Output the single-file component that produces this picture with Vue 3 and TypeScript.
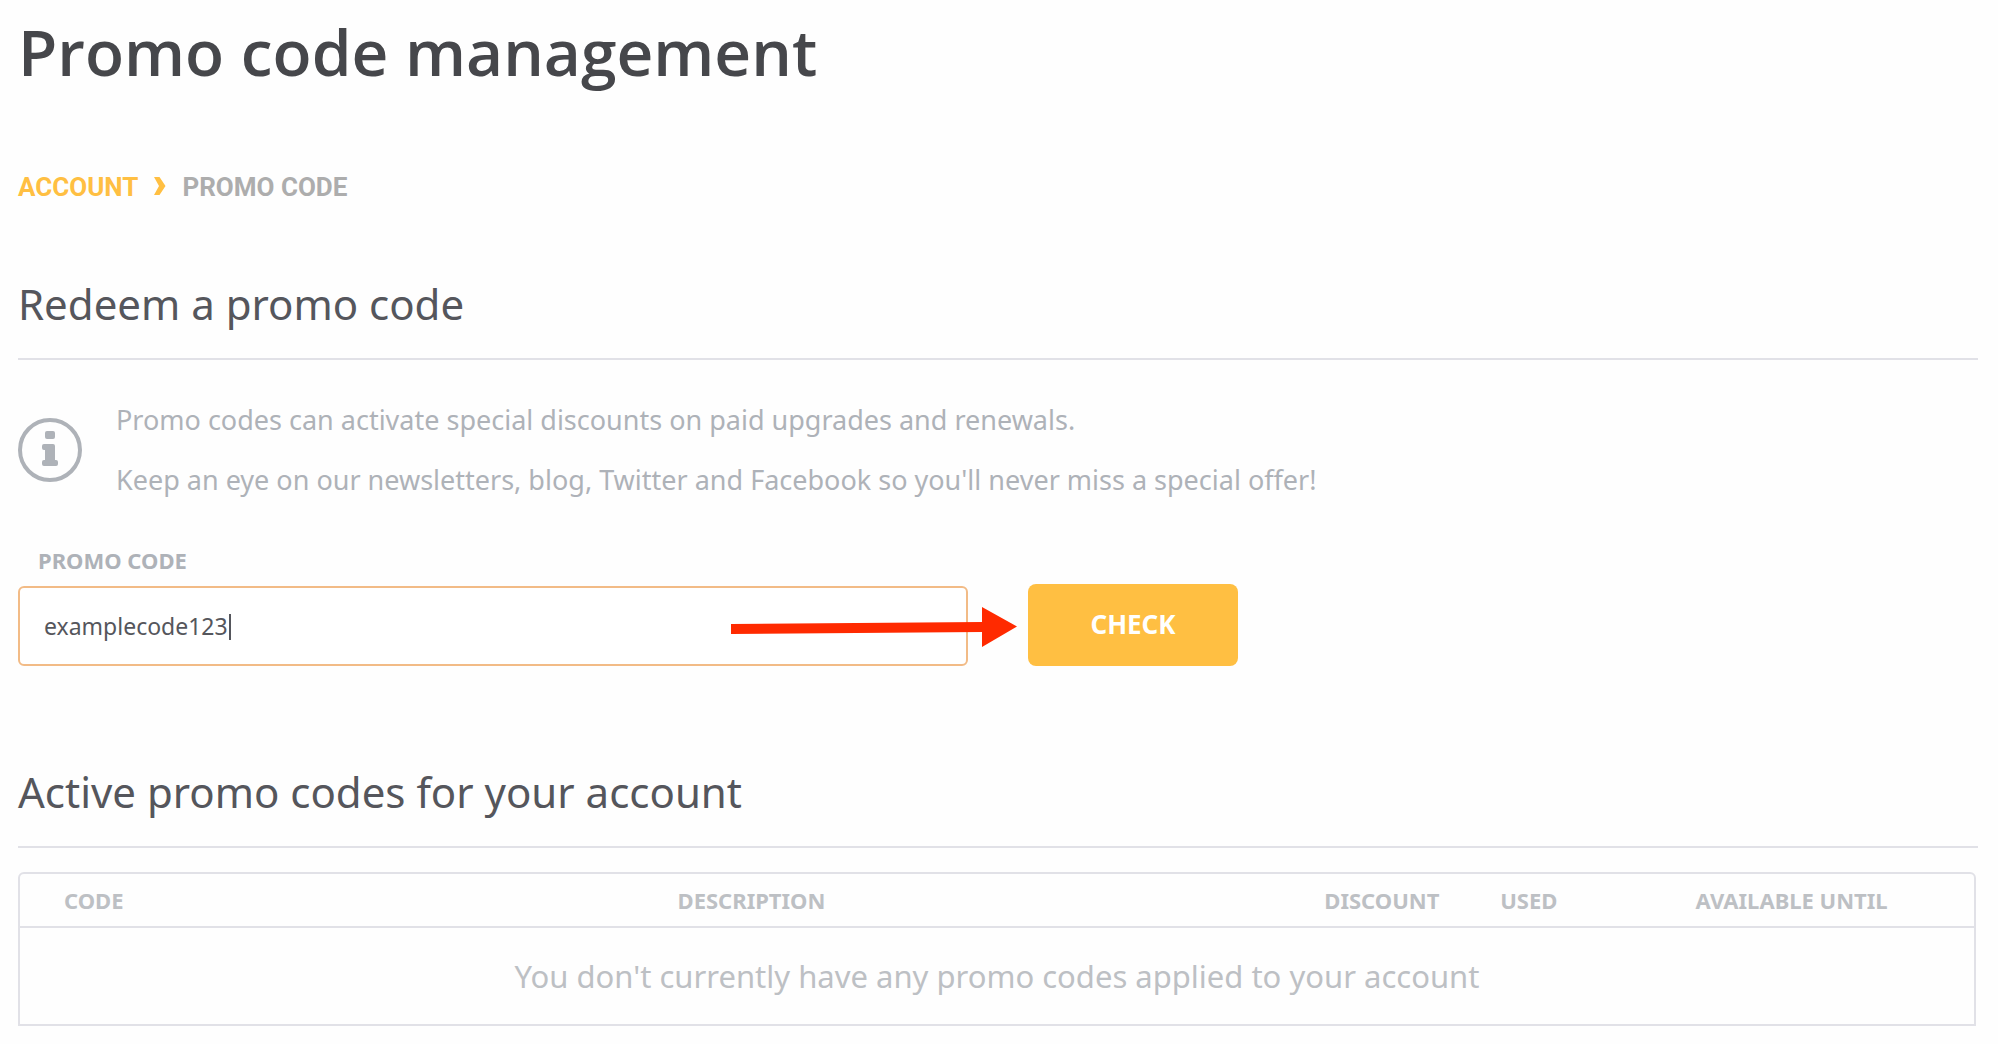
<script setup lang="ts">
import { ref } from 'vue'

interface Column {
  key: string
  label: string
}

const promoCode = ref<string>('examplecode123')

const columns: Column[] = [
  { key: 'code', label: 'CODE' },
  { key: 'description', label: 'DESCRIPTION' },
  { key: 'discount', label: 'DISCOUNT' },
  { key: 'used', label: 'USED' },
  { key: 'until', label: 'AVAILABLE UNTIL' },
]
</script>

<template>
  <main class="page">
    <h1 class="title">Promo code management</h1>

    <nav class="crumbs" aria-label="Breadcrumb">
      <a class="crumb-link" href="#account">ACCOUNT</a>
      <svg class="crumb-arrow" viewBox="0 0 12 18" aria-hidden="true">
        <path d="M0 0h5.500l6 9-6 9H0l5-9z" fill="#ffbf42" />
      </svg>
      <span>PROMO CODE</span>
    </nav>

    <section>
      <h2 class="heading">Redeem a promo code</h2>

      <div class="info">
        <svg class="info-icon" viewBox="0 0 64 64" aria-hidden="true">
          <circle cx="32" cy="32" r="30" fill="none" stroke="#aeb2b8" stroke-width="4" />
          <rect x="27" y="13" width="10" height="8" rx="2" fill="#aeb2b8" />
          <path
            d="M26 26h9a2 2 0 0 1 2 2v14h1a2 2 0 0 1 2 2v2a2 2 0 0 1-2 2H26a2 2 0 0 1-2-2v-2a2 2 0 0 1 2-2h1V32h-1a2 2 0 0 1-2-2v-2a2 2 0 0 1 2-2z"
            fill="#aeb2b8"
          />
        </svg>
        <div>
          <p>Promo codes can activate special discounts on paid upgrades and renewals.</p>
          <p>Keep an eye on our newsletters, blog, Twitter and Facebook so you'll never miss a special offer!</p>
        </div>
      </div>

      <form class="redeem" @submit.prevent>
        <div class="field">
          <label class="label" for="promo">PROMO CODE</label>
          <div class="control">
            <input id="promo" v-model="promoCode" class="input" type="text" autocomplete="off" spellcheck="false" />
            <span class="caret" aria-hidden="true"></span>
            <svg class="pointer" viewBox="0 0 286 40" aria-hidden="true">
              <path d="M0 17L251 15V0l35 19.500L251 40V25L0 27z" fill="#ff2a00" />
            </svg>
          </div>
        </div>
        <button class="check" type="submit">CHECK</button>
      </form>
    </section>

    <section class="active">
      <h2 class="heading">Active promo codes for your account</h2>

      <div class="table-frame">
        <table class="table">
          <colgroup>
            <col v-for="column in columns" :key="column.key" :class="`col-${column.key}`" />
          </colgroup>
          <thead>
            <tr>
              <th v-for="column in columns" :key="column.key" scope="col">{{ column.label }}</th>
            </tr>
          </thead>
          <tbody>
            <tr>
              <td :colspan="columns.length">You don't currently have any promo codes applied to your account</td>
            </tr>
          </tbody>
        </table>
      </div>
    </section>
  </main>
</template>

<style>
body {
  margin: 0;
  background: #fefefe;
}
</style>

<style scoped>
.page {
  padding: 8px 20px 18px 18px;
  font-family: "Noto Sans", "Open Sans", sans-serif;
  color: #55565c;
}

.title {
  margin: 0;
  font-family: "Open Sans", sans-serif;
  font-size: 64px;
  font-weight: 600;
  line-height: 88px;
  color: #46474b;
}

.crumbs {
  display: flex;
  align-items: center;
  margin: 71px 0 67px;
  font-family: Roboto, sans-serif;
  font-size: 26px;
  font-weight: 700;
  line-height: 40px;
  color: #adadad;
}

.crumb-link {
  color: #ffbf42;
  text-decoration: none;
}

.crumb-arrow {
  width: 12px;
  height: 18px;
  margin: 0 16px 2px;
}

.heading {
  margin: 0;
  padding-bottom: 24px;
  border-bottom: 2px solid #e1e1e7;
  font-size: 42px;
  font-weight: 400;
  line-height: 60px;
}

.info {
  display: flex;
  align-items: center;
  gap: 34px;
  margin: 30px 0 34px;
  font-size: 27px;
  line-height: 60px;
  color: #aeb2b8;
}

.info p {
  margin: 0;
}

.info-icon {
  flex: none;
  width: 64px;
  height: 64px;
}

.redeem {
  display: flex;
  align-items: flex-end;
  gap: 60px;
}

.field {
  flex: 0 1 950px;
}

.label {
  display: block;
  margin-bottom: 10px;
  padding-left: 20px;
  font-size: 22px;
  font-weight: 700;
  line-height: 32px;
  color: #aeb2b8;
}

.control {
  position: relative;
}

.input {
  display: block;
  box-sizing: border-box;
  width: 100%;
  height: 80px;
  padding: 0 24px;
  border: 2px solid #f2bb86;
  border-radius: 6px;
  outline: none;
  background: #fff;
  font-family: inherit;
  font-size: 23px;
  color: #55565c;
}

.caret {
  position: absolute;
  top: 28px;
  left: 211px;
  width: 2px;
  height: 26px;
  background: #55565c;
}

.pointer {
  position: absolute;
  top: 21px;
  right: -49px;
  width: 286px;
  height: 40px;
}

.check {
  flex: none;
  width: 210px;
  height: 82px;
  padding: 0 0 2px;
  border: 0;
  border-radius: 8px;
  background: #ffbf42;
  font-family: inherit;
  font-size: 26px;
  font-weight: 700;
  color: #fff;
}

.active {
  margin-top: 96px;
}

.table-frame {
  margin: 24px 2px 0 0;
  border: 2px solid #e1e1e7;
  border-radius: 6px 6px 0 0;
}

.table {
  width: 100%;
  table-layout: fixed;
  border-collapse: separate;
  border-spacing: 0;
  color: #bdc0c4;
}

.col-code {
  width: 31.4%;
}

.col-description {
  width: 33.1%;
}

.col-discount {
  width: 9%;
}

.col-used {
  width: 10%;
}

.table th {
  height: 52px;
  padding: 0 0 0 44px;
  border-bottom: 2px solid #e1e1e7;
  font-size: 22px;
  font-weight: 700;
  text-align: left;
  white-space: nowrap;
}

.table td {
  height: 96px;
  padding: 0;
  font-size: 31px;
  text-align: center;
}
</style>
